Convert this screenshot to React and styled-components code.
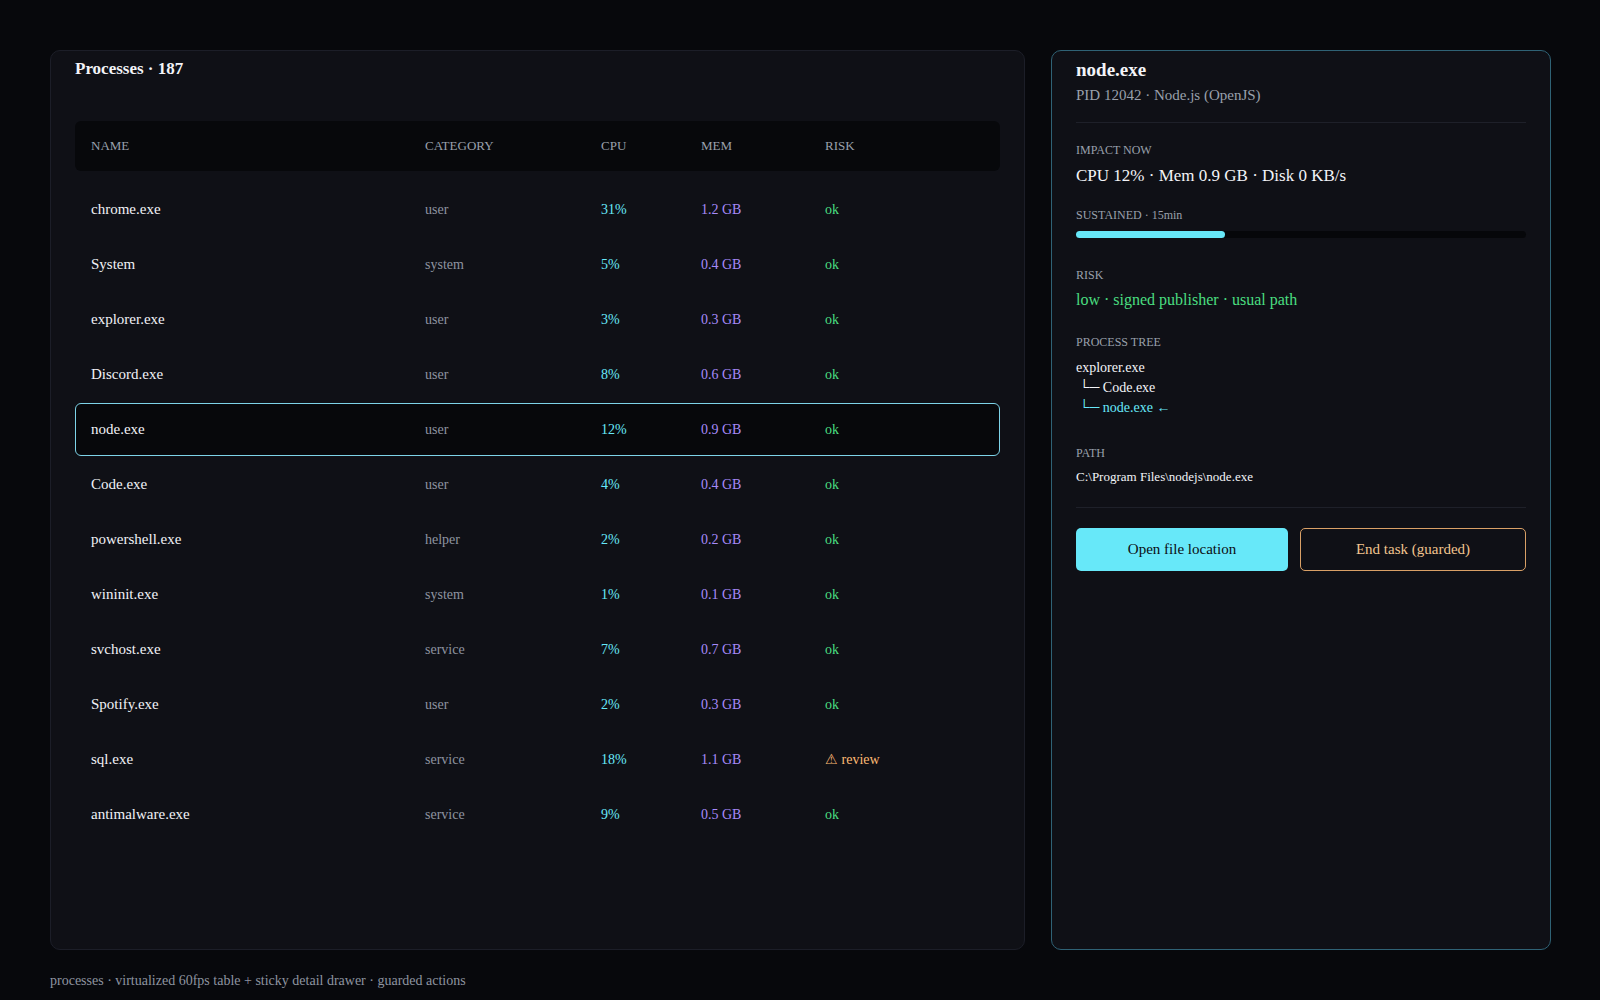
import React from 'react';
import styled, { createGlobalStyle } from 'styled-components';

const Global = createGlobalStyle`
  html, body { margin:0; background:#07080c; }
  body { font-family:"Liberation Serif", "Times New Roman", serif; color:#e6e8ee; }
`;

const Page = styled.div`
  width:1600px; height:1000px; box-sizing:border-box;
  padding:50px 50px 0 50px;
  display:flex; flex-direction:column;
`;

const Main = styled.div`
  display:grid; grid-template-columns:975px 500px; gap:26px;
  height:900px;
`;

const Panel = styled.div`
  background:#0f1016;
  border:1px solid ${p => p.accent ? '#2f6275' : '#1c1e28'};
  border-radius:10px;
  padding:8px 24px 24px;
  box-sizing:border-box;
`;

const Title = styled.div`
  font-weight:bold; font-size:${p => p.big ? '19px' : '17px'}; color:#f3f4f8;
`;

const Table = styled.div`
  margin-top:42px;
`;

const Row = styled.div`
  display:grid; grid-template-columns:334px 176px 100px 124px 1fr;
  align-items:center; padding-left:15px;
  height:${p => p.head ? '50px' : '53px'};
  box-sizing:border-box;
  border-radius:6px;
  border:1px solid ${p => p.selected ? '#7dd3e8' : 'transparent'};
  background:${p => p.head || p.selected ? '#07080b' : 'transparent'};
  margin-bottom:${p => p.head ? '12px' : '2px'};
  font-size:${p => p.head ? '13px' : '15px'};
  color:${p => p.head ? '#9aa0ac' : '#f1f2f6'};
`;

const Cell = styled.span`
  color:${p => ({ cat: '#8e94a0', cpu: '#67e8f9', mem: '#a78bfa', ok: '#4ade80', warn: '#fdba74' }[p.tone] || 'inherit')};
  font-size:${p => p.tone && p.tone !== 'name' ? '14px' : 'inherit'};
`;

const Sub = styled.div`
  color:#9aa0ac; font-size:15px; margin-top:6px;
`;

const Divider = styled.div`
  height:1px; background:#1e2029; margin:${p => p.m || '18px 0 20px'};
`;

const Label = styled.div`
  font-size:12px; color:#9aa0ac; margin-bottom:8px;
`;

const Value = styled.div`
  font-size:${p => p.size || '17px'};
  color:${p => p.color || '#f3f4f8'};
  margin-bottom:${p => p.mb || '22px'};
`;

const Track = styled.div`
  height:7px; border-radius:4px; background:#06070a; margin:4px 0 30px;
`;

const Fill = styled.div`
  height:100%; border-radius:4px; background:#67e8f9;
`;

const Tree = styled.div`
  font-size:14px; line-height:20px; color:#f3f4f8; margin-bottom:28px;
  div.hit { color:#67e8f9; }
`;

const Actions = styled.div`
  display:grid; grid-template-columns:212px 1fr; gap:12px;
`;

const Button = styled.button`
  height:43px; border-radius:5px; font-family:inherit; font-size:15px;
  background:${p => p.primary ? '#67e8f9' : 'transparent'};
  color:${p => p.primary ? '#0b0d12' : '#f1c48f'};
  border:${p => p.primary ? 'none' : '1.5px solid #d9a066'};
`;

const Footer = styled.div`
  margin-top:23px; font-size:14px; color:#8e94a0;
`;

const rows = [
  ['chrome.exe', 'user', '31%', '1.2 GB'],
  ['System', 'system', '5%', '0.4 GB'],
  ['explorer.exe', 'user', '3%', '0.3 GB'],
  ['Discord.exe', 'user', '8%', '0.6 GB'],
  ['node.exe', 'user', '12%', '0.9 GB'],
  ['Code.exe', 'user', '4%', '0.4 GB'],
  ['powershell.exe', 'helper', '2%', '0.2 GB'],
  ['wininit.exe', 'system', '1%', '0.1 GB'],
  ['svchost.exe', 'service', '7%', '0.7 GB'],
  ['Spotify.exe', 'user', '2%', '0.3 GB'],
  ['sql.exe', 'service', '18%', '1.1 GB', true],
  ['antimalware.exe', 'service', '9%', '0.5 GB'],
];

export default function App() {
  return (
    <Page>
      <Global />
      <Main>
        <Panel>
          <Title>Processes · 187</Title>
          <Table>
            <Row head>
              <span>NAME</span><span>CATEGORY</span><span>CPU</span><span>MEM</span><span>RISK</span>
            </Row>
            {rows.map(([n, c, cpu, mem, warn]) => (
              <Row key={n} selected={n === 'node.exe'}>
                <Cell>{n}</Cell>
                <Cell tone="cat">{c}</Cell>
                <Cell tone="cpu">{cpu}</Cell>
                <Cell tone="mem">{mem}</Cell>
                {warn ? <Cell tone="warn">⚠ review</Cell> : <Cell tone="ok">ok</Cell>}
              </Row>
            ))}
          </Table>
        </Panel>
        <Panel accent>
          <Title big>node.exe</Title>
          <Sub>PID 12042 · Node.js (OpenJS)</Sub>
          <Divider />
          <Label>IMPACT NOW</Label>
          <Value>CPU 12% · Mem 0.9 GB · Disk 0 KB/s</Value>
          <Label>SUSTAINED · 15min</Label>
          <Track><Fill style={{ width: '33%' }} /></Track>
          <Label>RISK</Label>
          <Value size="16px" color="#4ade80" mb="26px">low · signed publisher · usual path</Value>
          <Label>PROCESS TREE</Label>
          <Tree>
            <div>explorer.exe</div>
            <div>&nbsp;└─ Code.exe</div>
            <div className="hit">&nbsp;└─ node.exe ←</div>
          </Tree>
          <Label>PATH</Label>
          <Value size="13px" mb="0">C:\Program Files\nodejs\node.exe</Value>
          <Divider m="22px 0 20px" />
          <Actions>
            <Button primary>Open file location</Button>
            <Button>End task (guarded)</Button>
          </Actions>
        </Panel>
      </Main>
      <Footer>processes · virtualized 60fps table + sticky detail drawer · guarded actions</Footer>
    </Page>
  );
}
